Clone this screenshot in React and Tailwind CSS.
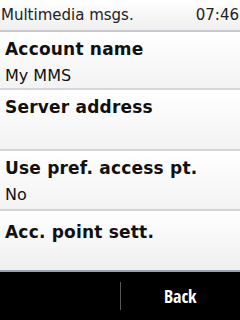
import React from 'react';

const font = { fontFamily: '"DejaVu Sans", "Open Sans", sans-serif' };

function Row({ title, value, height }) {
  return (
    <div className={`${height} flex flex-col border-b-2 border-[#d4d4da] bg-gradient-to-b from-white to-[#f3f3f3] px-[5px]`}>
      <div className="mt-[4px] text-[17px] font-bold leading-[26px] tracking-[0.2px] text-[#111]">{title}</div>
      {value && <div className="mt-[3px] text-[16px] leading-[22px] text-[#111]">{value}</div>}
    </div>
  );
}

export default function App() {
  return (
    <div className="flex h-[320px] w-[240px] flex-col overflow-hidden bg-white" style={font}>
      <div className="flex h-[32px] items-center justify-between border-b-2 border-[#c8c8ce] bg-gradient-to-b from-white to-[#f0f0f0] pl-[1px] pr-[1px] text-[15px] text-[#222]">
        <span>Multimedia msgs.</span>
        <span>07:46</span>
      </div>
      <Row title="Account name" value="My MMS" height="h-[58px]" />
      <Row title="Server address" height="h-[61px]" />
      <Row title="Use pref. access pt." value="No" height="h-[60px]" />
      <div className="flex h-[61px] flex-col border-b-2 border-[#9aa0b4] bg-gradient-to-b from-white to-[#efefef] px-[5px]">
        <div className="mt-[8px] text-[17px] font-bold leading-[26px] tracking-[0.2px] text-[#111]">Acc. point sett.</div>
      </div>
      <div className="flex flex-1 items-center bg-black">
        <div className="flex-1" />
        <div className="h-[28px] w-px bg-[#555]" />
        <div className="flex flex-1 items-center justify-center text-[18px] font-bold text-white" style={{ fontFamily: '"Open Sans Condensed", "Liberation Sans Narrow", "DejaVu Sans Condensed", sans-serif' }}>
          Back
        </div>
      </div>
    </div>
  );
}
